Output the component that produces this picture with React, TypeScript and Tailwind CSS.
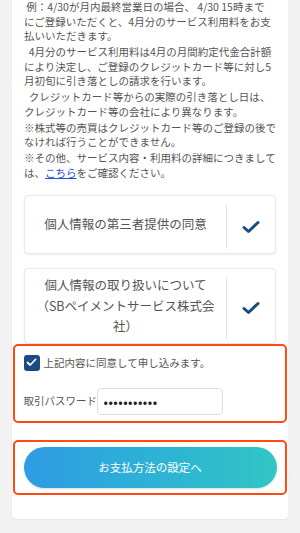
import React from 'react';

const font = { fontFamily: '"Noto Sans CJK JP", "Noto Sans", sans-serif' };

function Check() {
  return (
    <svg width="18" height="14" viewBox="0 0 18 14" fill="none">
      <path d="M2 7.5 L6.5 11.5 L16 2.5" stroke="#1b4a80" strokeWidth="3" strokeLinecap="round" strokeLinejoin="round" />
    </svg>
  );
}

function ConsentRow({ lines, className }: { lines: string[]; className: string }) {
  return (
    <div className={`flex bg-white border border-[#e8e8e8] rounded-[4px] shadow-[0_1px_2px_rgba(0,0,0,0.08)] ${className}`}>
      <div className="flex-1 flex flex-col items-center justify-center text-[12.5px] leading-[20.5px] text-[#555] text-center">
        {lines.map((l) => (
          <span key={l} className="whitespace-nowrap">{l}</span>
        ))}
      </div>
      <div className="w-[49px] flex items-center justify-center border-l border-[#e6e6e6] my-[8px] mb-[4px]">
        <Check />
      </div>
    </div>
  );
}

export default function App() {
  const paragraphs = [
    [' 例：4/30が月内最終営業日の場合、 4/30 15時まで', 'にご登録いただくと、4月分のサービス利用料をお支', '払いいただきます。'],
    ['\u00a0 4月分のサービス利用料は4月の月間約定代金合計額', 'により決定し、ご登録のクレジットカード等に対し5', '月初旬に引き落としの請求を行います。'],
    ['\u00a0 クレジットカード等からの実際の引き落とし日は、', 'クレジットカード等の会社により異なります。'],
    ['※株式等の売買はクレジットカード等のご登録の後で', 'なければ行うことができません。'],
  ];

  return (
    <div className="min-h-[533px] bg-[#f2f2f2] px-[12px]" style={font}>
      <div className="bg-white rounded-b-[4px] shadow-[0_1px_2px_rgba(0,0,0,0.05)] px-[12px] pb-[24px]">
        <div className="text-[10.5px] leading-[14.5px] text-[#555]">
          {paragraphs.map((p, i) => (
            <p key={i} className={i === 0 ? '' : 'mt-[1.5px]'}>
              {p.map((l) => (
                <span key={l} className="block whitespace-pre">{l}</span>
              ))}
            </p>
          ))}
          <p className="mt-[1.5px]">
            <span className="block whitespace-pre">※その他、サービス内容・利用料の詳細につきまして</span>
            <span className="block whitespace-pre">
              は、<span className="text-[#1a55d6] underline">こちら</span>をご確認ください。
            </span>
          </p>
        </div>

        <ConsentRow lines={['個人情報の第三者提供の同意']} className="mt-[15px] h-[59px]" />
        <ConsentRow
          lines={['個人情報の取り扱いについて', '（SBペイメントサービス株式会', '社）']}
          className="mt-[14px] h-[76px]"
        />

        <div className="-mx-[11px] border-[2.5px] border-[#ff4b12] rounded-[5px] px-[8.5px] pt-[8.5px] pb-[6px]">
          <label className="flex items-center gap-[4px]">
            <span className="w-[16px] h-[16px] rounded-[3px] bg-[#1c4b82] flex items-center justify-center">
              <svg width="11" height="9" viewBox="0 0 11 9" fill="none">
                <path d="M1.5 4.5 L4.2 7 L9.5 1.5" stroke="white" strokeWidth="1.8" strokeLinecap="round" strokeLinejoin="round" />
              </svg>
            </span>
            <span className="text-[10.5px] text-[#555]">上記内容に同意して申し込みます。</span>
          </label>
          <div className="flex items-center mt-[17px]">
            <span className="text-[10.5px] text-[#555] w-[73px] whitespace-nowrap">取引パスワード</span>
            <input
              type="password"
              readOnly
              value="12345678901"
              className="w-[126px] h-[27px] border border-[#d6dee9] rounded-[4px] px-[6px] text-[13px] tracking-[0.5px] text-[#222] outline-none"
            />
          </div>
        </div>

        <div className="-mx-[11px] mt-[17px] border-[2.5px] border-[#ff4b12] rounded-[5px] px-[8.5px] pt-[5.5px] pb-[4.5px]">
          <button className="w-full h-[41px] rounded-full bg-gradient-to-r from-[#2f9be4] to-[#31c6c4] text-white text-[11.5px] shadow-[0_1px_2px_rgba(0,0,0,0.15)]">
            お支払方法の設定へ
          </button>
        </div>
      </div>
    </div>
  );
}
